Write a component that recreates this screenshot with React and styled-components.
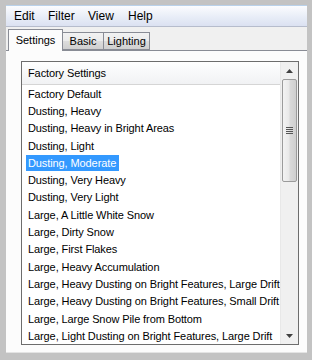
import React from 'react';
import styled, { createGlobalStyle } from 'styled-components';

const Global = createGlobalStyle`
  html, body { margin: 0; padding: 0; background: #c3c3c3; }
  body { font-family: "Liberation Sans", Arial, sans-serif; font-size: 11px; color: #000; }
`;

const Frame = styled.div`
  width: 312px;
  height: 360px;
  box-sizing: border-box;
  padding: 5px 5px 7px 6px;
  background: #c3c3c3;
  display: flex;
`;

const Window = styled.div`
  flex: 1;
  min-height: 0;
  display: flex;
  flex-direction: column;
  background: #f0f0f0;
  border-top: 1px solid #b9d1ea;
  border-bottom: 1px solid #e4e4e4;
  overflow: hidden;
`;

const MenuBar = styled.div`
  flex: none;
  height: 20px;
  display: flex;
  align-items: center;
  padding-left: 2px;
  background: linear-gradient(#fbfcfe, #e8edf7 55%, #dbe1f1);
  border-bottom: 1px solid #b6bccc;
`;

const MenuItem = styled.span`
  width: ${p => p.w}px;
  padding-left: 6px;
  box-sizing: border-box;
  font-size: 12px;
`;

const Tabs = styled.div`
  flex: none;
  display: flex;
  align-items: flex-end;
  height: 23px;
  padding-left: 2px;
  border-bottom: 1px solid #898c95;
`;

const Tab = styled.div`
  box-sizing: border-box;
  height: ${p => (p.active ? 22 : 18)}px;
  margin-bottom: ${p => (p.active ? -1 : 0)}px;
  padding-top: ${p => (p.active ? 4 : 2)}px;
  text-align: center;
  border: 1px solid #898c95;
  border-bottom: ${p => (p.active ? 'none' : '1px solid #898c95')};
  margin-left: ${p => (p.first ? 0 : -1)}px;
  background: ${p => (p.active ? '#fcfcfc' : 'linear-gradient(#f2f2f2, #ebebeb 50%, #dddddd 51%, #cfcfcf)')};
  z-index: ${p => (p.active ? 1 : 0)};
  font-size: 11px;
  white-space: nowrap;
  width: ${p => p.w}px;
`;

const Body = styled.div`
  flex: 1;
  min-height: 0;
  background: #fcfcfc;
  padding: 10px 8px 7px 15px;
  display: flex;
`;

const ListBox = styled.div`
  flex: 1;
  min-height: 0;
  display: flex;
  border: 1px solid #6d6d6d;
  background: #ffffff;
  overflow: hidden;
`;

const ListCol = styled.div`
  flex: 1;
  min-width: 0;
  overflow: hidden;
  display: flex;
  flex-direction: column;
`;

const Header = styled.div`
  height: 22px;
  flex: none;
  display: flex;
  align-items: center;
  padding-left: 6px;
  background: linear-gradient(#ffffff, #f7f8f9 50%, #f1f2f4);
  border-bottom: 1px solid #d5d5d5;
  letter-spacing: -0.1px;
`;

const Items = styled.div`
  display: flex;
  flex-direction: column;
`;

const Item = styled.div`
  height: 17.3px;
  flex: none;
  display: flex;
  align-items: center;
  white-space: nowrap;
  padding-left: 4px;
  letter-spacing: -0.1px;
  span {
    padding: 0 3px 0 2px;
    line-height: 16px;
    background: ${p => (p.selected ? '#3399ff' : 'transparent')};
    color: ${p => (p.selected ? '#ffffff' : '#000000')};
  }
`;

const ScrollBar = styled.div`
  width: 17px;
  flex: none;
  display: flex;
  flex-direction: column;
  background: #f0f0f0;
  border-left: 1px solid #e8e8e8;
`;

const Arrow = styled.div`
  height: 17px;
  flex: none;
  display: flex;
  align-items: center;
  justify-content: center;
`;

const Track = styled.div`
  flex: 1;
  display: flex;
  flex-direction: column;
`;

const Thumb = styled.div`
  height: ${p => p.h}px;
  margin: 0 1px;
  border: 1px solid #9b9b9b;
  border-radius: 2px;
  background: linear-gradient(90deg, #f3f3f3, #e9e9e9 45%, #d9d9d9 55%, #cfcfcf);
  display: flex;
  align-items: center;
  justify-content: center;
`;

const items = [
  'Factory Default',
  'Dusting, Heavy',
  'Dusting, Heavy in Bright Areas',
  'Dusting, Light',
  'Dusting, Moderate',
  'Dusting, Very Heavy',
  'Dusting, Very Light',
  'Large, A Little White Snow',
  'Large, Dirty Snow',
  'Large, First Flakes',
  'Large, Heavy Accumulation',
  'Large, Heavy Dusting on Bright Features, Large Drift',
  'Large, Heavy Dusting on Bright Features, Small Drift',
  'Large, Large Snow Pile from Bottom',
  'Large, Light Dusting on Bright Features, Large Drift',
  'Large, Large Snow',
];

function TriUp() {
  return (
    <svg width="7" height="4" viewBox="0 0 7 4">
      <path d="M0 4 L3.5 0 L7 4 Z" fill="#404040" />
    </svg>
  );
}

function TriDown() {
  return (
    <svg width="7" height="4" viewBox="0 0 7 4">
      <path d="M0 0 L3.5 4 L7 0 Z" fill="#404040" />
    </svg>
  );
}

function Grip() {
  return (
    <svg width="7" height="8" viewBox="0 0 7 8">
      {[0, 2, 4, 6].map(y => (
        <rect key={y} x="0" y={y} width="7" height="1" fill="#555" />
      ))}
    </svg>
  );
}

export default function App() {
  return (
    <>
      <Global />
      <Frame>
        <Window>
          <MenuBar>
            <MenuItem w={34}>Edit</MenuItem>
            <MenuItem w={40}>Filter</MenuItem>
            <MenuItem w={40}>View</MenuItem>
            <MenuItem w={40}>Help</MenuItem>
          </MenuBar>
          <Tabs>
            <Tab active first w={55}>Settings</Tab>
            <Tab w={42}>Basic</Tab>
            <Tab w={47}>Lighting</Tab>
          </Tabs>
          <Body>
            <ListBox>
              <ListCol>
                <Header>Factory Settings</Header>
                <Items>
                  {items.map(t => (
                    <Item key={t} selected={t === 'Dusting, Moderate'}>
                      <span>{t}</span>
                    </Item>
                  ))}
                </Items>
              </ListCol>
              <ScrollBar>
                <Arrow><TriUp /></Arrow>
                <Track>
                  <Thumb h={101}><Grip /></Thumb>
                </Track>
                <Arrow><TriDown /></Arrow>
              </ScrollBar>
            </ListBox>
          </Body>
        </Window>
      </Frame>
    </>
  );
}
